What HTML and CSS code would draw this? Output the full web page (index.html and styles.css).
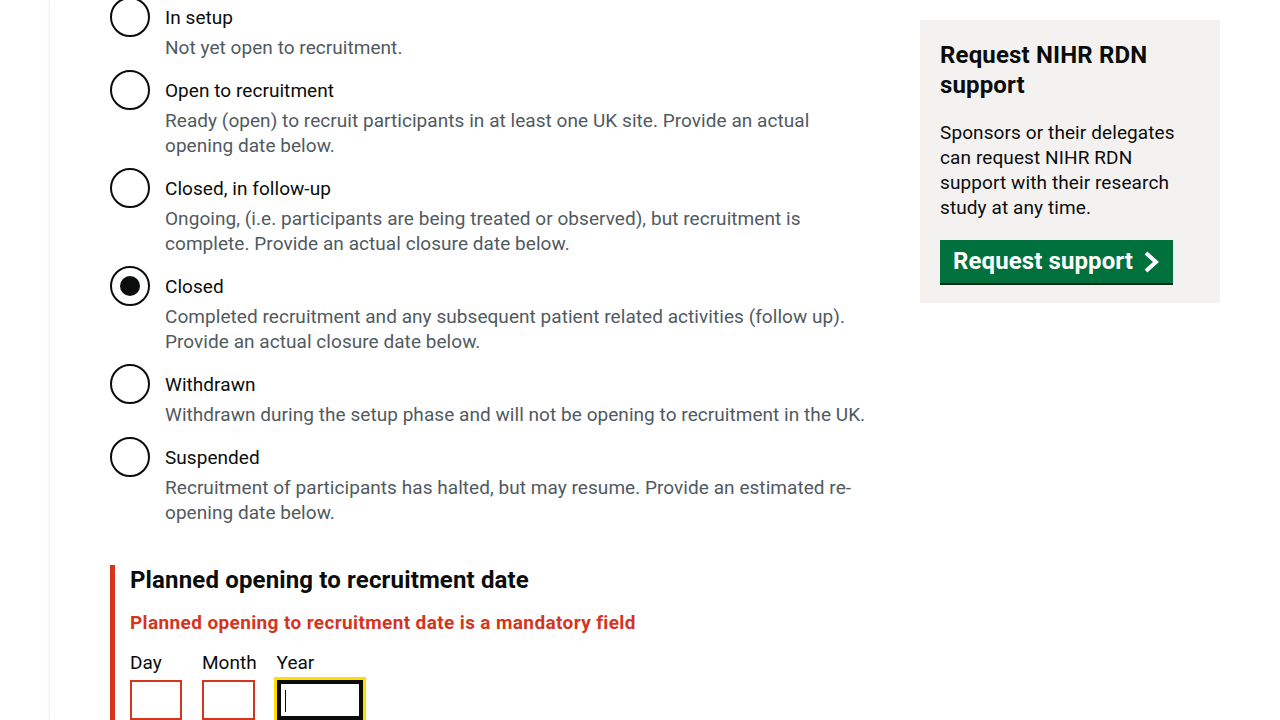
FILE: index.html
```html
<!DOCTYPE html>
<html lang="en">
<head>
<meta charset="utf-8">
<title>Study status</title>
<link rel="stylesheet" href="styles.css">
</head>
<body>
<div class="page">
  <div class="layout">
    <main class="main">
      <div class="radios">
        <div class="radio-item">
          <span class="radio"></span>
          <div class="radio-text">
            <div class="radio-label">In setup</div>
            <div class="radio-hint">Not yet open to recruitment.</div>
          </div>
        </div>
        <div class="radio-item">
          <span class="radio"></span>
          <div class="radio-text">
            <div class="radio-label">Open to recruitment</div>
            <div class="radio-hint">Ready (open) to recruit participants in at least one UK site. Provide an actual opening date below.</div>
          </div>
        </div>
        <div class="radio-item">
          <span class="radio"></span>
          <div class="radio-text">
            <div class="radio-label">Closed, in follow-up</div>
            <div class="radio-hint">Ongoing, (i.e. participants are being treated or observed), but recruitment is complete. Provide an actual closure date below.</div>
          </div>
        </div>
        <div class="radio-item">
          <span class="radio radio-checked"></span>
          <div class="radio-text">
            <div class="radio-label">Closed</div>
            <div class="radio-hint">Completed recruitment and any subsequent patient related activities (follow up). Provide an actual closure date below.</div>
          </div>
        </div>
        <div class="radio-item">
          <span class="radio"></span>
          <div class="radio-text">
            <div class="radio-label">Withdrawn</div>
            <div class="radio-hint">Withdrawn during the setup phase and will not be opening to recruitment in the UK.</div>
          </div>
        </div>
        <div class="radio-item">
          <span class="radio"></span>
          <div class="radio-text">
            <div class="radio-label">Suspended</div>
            <div class="radio-hint">Recruitment of participants has halted, but may resume. Provide an estimated re-opening date below.</div>
          </div>
        </div>
      </div>

      <div class="form-group-error">
        <h2 class="legend">Planned opening to recruitment date</h2>
        <p class="error-message">Planned opening to recruitment date is a mandatory field</p>
        <div class="date-input">
          <div class="date-item">
            <label class="date-label">Day</label>
            <div class="input input-error input-day"></div>
          </div>
          <div class="date-item">
            <label class="date-label">Month</label>
            <div class="input input-error input-month"></div>
          </div>
          <div class="date-item">
            <label class="date-label">Year</label>
            <div class="input input-focus input-year"><span class="caret"></span></div>
          </div>
        </div>
      </div>
    </main>

    <aside class="sidebar">
      <h2 class="sidebar-title">Request NIHR RDN support</h2>
      <p class="sidebar-body">Sponsors or their delegates can request NIHR RDN support with their research study at any time.</p>
      <a class="button-start" href="#">Request support
        <svg class="chevron" width="18" height="22" viewBox="0 0 18 22" aria-hidden="true"><path d="M3 2 L13 11 L3 20" fill="none" stroke="#ffffff" stroke-width="4" stroke-linejoin="miter"/></svg>
      </a>
    </aside>
  </div>
</div>
</body>
</html>
```

FILE: styles.css
```css
* { box-sizing: border-box; }

html, body {
  margin: 0;
  padding: 0;
  background: #ffffff;
  overflow: hidden;
}

body {
  font-family: Roboto, "Liberation Sans", Arial, sans-serif;
  color: #0b0c0c;
  -webkit-font-smoothing: antialiased;
}

.page {
  margin-left: 50px;
  min-height: 720px;
  background: #ffffff;
  box-shadow: 0 0 4px rgba(0, 0, 0, 0.13);
  padding-left: 60px;
}

.layout {
  display: flex;
  align-items: flex-start;
  gap: 40px;
}

.main {
  width: 770px;
  margin-top: -3px;
}

.radio-item {
  display: flex;
  margin-bottom: 10px;
}

.radio {
  flex: none;
  width: 40px;
  height: 40px;
  border: 2px solid #0b0c0c;
  border-radius: 50%;
  display: flex;
  align-items: center;
  justify-content: center;
}

.radio-checked::after {
  content: "";
  width: 20px;
  height: 20px;
  border-radius: 50%;
  background: #0b0c0c;
}

.radio-text {
  padding: 0 0 0 15px;
  flex: 1;
}

.radio-label {
  font-size: 19px;
  line-height: 25px;
  padding: 8px 0 5px;
  letter-spacing: 0.05px;
}

.radio-hint {
  font-size: 19px;
  line-height: 25px;
  color: #505a5f;
  letter-spacing: 0.05px;
}

.form-group-error {
  margin-top: 40px;
  border-left: 5px solid #d4351c;
  padding-left: 15px;
}

.legend {
  margin: 0 0 15px;
  font-size: 24px;
  line-height: 30px;
  font-weight: 700;
  letter-spacing: 0.15px;
}

.error-message {
  margin: 0 0 15px;
  font-size: 19px;
  line-height: 25px;
  font-weight: 700;
  color: #d4351c;
  letter-spacing: 0.37px;
}

.date-input {
  display: flex;
  align-items: flex-start;
  gap: 20px;
}

.date-item {
  display: flex;
  flex-direction: column;
  align-items: flex-start;
}

.date-label {
  font-size: 19px;
  line-height: 25px;
  margin-bottom: 5px;
}

.input {
  height: 40px;
  border: 2px solid #0b0c0c;
  background: #ffffff;
  position: relative;
}

.input-error {
  border-color: #d4351c;
}

.input-day { width: 52px; }
.input-month { width: 53px; }
.input-year { width: 86px; }

.input-focus {
  outline: 3px solid #ffdd00;
  outline-offset: 0;
  box-shadow: inset 0 0 0 2px #0b0c0c;
}

.caret {
  position: absolute;
  left: 6px;
  top: 8px;
  width: 1px;
  height: 22px;
  background: #0b0c0c;
}

.sidebar {
  width: 300px;
  margin-top: 20px;
  background: #f3f2f1;
  padding: 20px 20px 20px;
}

.sidebar-title {
  margin: 0 0 20px;
  font-size: 24px;
  line-height: 30px;
  font-weight: 700;
  letter-spacing: 0.15px;
}

.sidebar-body {
  margin: 0 0 20px;
  font-size: 19px;
  line-height: 25px;
  padding-right: 15px;
  letter-spacing: 0.1px;
}

.button-start {
  display: inline-flex;
  align-items: center;
  gap: 10px;
  background: #00703c;
  color: #ffffff;
  text-decoration: none;
  font-size: 24px;
  font-weight: 700;
  line-height: 29px;
  padding: 7px 12px 7px 13px;
  box-shadow: 0 2px 0 #002d18;
  letter-spacing: 0.1px;
}

.chevron {
  display: block;
}
```
